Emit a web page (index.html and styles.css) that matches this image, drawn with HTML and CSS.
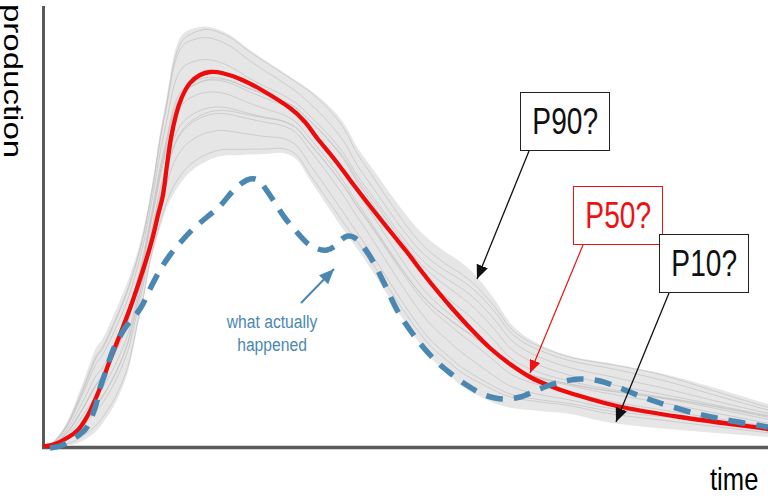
FILE: index.html
```html
<!DOCTYPE html>
<html lang="en">
<head>
<meta charset="utf-8">
<title>Production forecast uncertainty</title>
<link rel="stylesheet" href="styles.css">
</head>
<body>
<div class="chart">
  <svg class="plot" width="768" height="500" viewBox="0 0 768 500">
    <defs>
      <marker id="ah-black" markerUnits="userSpaceOnUse" viewBox="0 0 14 12" markerWidth="14" markerHeight="12" refX="14" refY="6" orient="auto"><path class="head-black" d="M0,0 L14,6 L0,12 Z"/></marker>
      <marker id="ah-red" markerUnits="userSpaceOnUse" viewBox="0 0 13 11" markerWidth="13" markerHeight="11" refX="13" refY="5.5" orient="auto"><path class="head-red" d="M0,0 L13,5.5 L0,11 Z"/></marker>
      <marker id="ah-blue" markerUnits="userSpaceOnUse" viewBox="0 0 15 13" markerWidth="15" markerHeight="13" refX="15" refY="6.5" orient="auto"><path class="head-blue" d="M0,0 L15,6.5 L0,13 Z"/></marker>
    </defs>
    <line class="axis" x1="43.5" y1="6" x2="43.5" y2="449"/>
    <line class="axis axis-x" x1="42" y1="447.5" x2="768" y2="447.5"/>
    <path id="band" class="band"/>
    <g id="runs" class="runs"></g>
    <path id="p50" class="p50"/>
    <path id="actual" class="actual"/>
    <line class="ptr ptr-black" x1="529" y1="151" x2="477" y2="279" marker-end="url(#ah-black)"/>
    <line class="ptr ptr-red" x1="583" y1="245" x2="530" y2="373" marker-end="url(#ah-red)"/>
    <line class="ptr ptr-black" x1="669" y1="293" x2="616" y2="422" marker-end="url(#ah-black)"/>
    <line class="ptr ptr-blue" x1="301" y1="303" x2="334" y2="269" marker-end="url(#ah-blue)"/>
  </svg>
  <div class="axis-title y-title">production</div>
  <div class="axis-title x-title"><span>time</span></div>
  <div class="callout c90"><span>P90?</span></div>
  <div class="callout c50"><span>P50?</span></div>
  <div class="callout c10"><span>P10?</span></div>
  <div class="note"><span>what actually<br>happened</span></div>
</div>
<script src="chart.js"></script>
</body>
</html>
```

FILE: styles.css
```css
html, body {
  margin: 0;
  padding: 0;
  background: #ffffff;
}
body {
  font-family: "Liberation Sans", Arial, sans-serif;
}
.chart {
  position: relative;
  width: 768px;
  height: 500px;
  overflow: hidden;
}
.plot {
  display: block;
}
.axis {
  stroke: #5a5a5a;
  stroke-width: 3;
}
.axis-x {
  stroke-width: 3.4;
}
.band {
  fill: #e6e6e6;
}
.runs path {
  fill: none;
  stroke: #c4c4c4;
  stroke-width: 0.8;
}
.p50 {
  fill: none;
  stroke: #ee0b0b;
  stroke-width: 4.3;
  stroke-linejoin: round;
  stroke-linecap: round;
}
.actual {
  fill: none;
  stroke: #4a88b2;
  stroke-width: 5.5;
  stroke-dasharray: 17 11;
}
.ptr {
  fill: none;
}
.ptr-black {
  stroke: #111111;
  stroke-width: 1.3;
}
.ptr-red {
  stroke: #ee1111;
  stroke-width: 1.2;
}
.ptr-blue {
  stroke: #4a88b2;
  stroke-width: 2;
}
.head-black { fill: #111111; }
.head-red { fill: #ee1111; }
.head-blue { fill: #4a88b2; }

.axis-title {
  position: absolute;
  left: 0;
  top: 0;
  color: #000000;
  white-space: nowrap;
}
.y-title {
  font-size: 33px;
  line-height: 33px;
  transform-origin: 0 0;
  transform: translate(26px, 4px) scaleX(0.78) rotate(90deg);
}
.x-title {
  left: 710px;
  top: 463px;
  font-size: 32px;
  line-height: 32px;
}
.x-title span {
  display: inline-block;
  transform-origin: 0 0;
  transform: scaleX(0.8);
}
.callout {
  position: absolute;
  box-sizing: border-box;
  width: 90px;
  height: 59px;
  background: #ffffff;
  border: 1.5px solid #222222;
  display: flex;
  align-items: center;
  justify-content: center;
  font-size: 37px;
  line-height: 1;
  color: #111111;
}
.callout span {
  display: inline-block;
  transform: scaleX(0.76);
}
.c90 { left: 520px; top: 92px; }
.c50 { left: 573px; top: 186px; border-color: #ee1111; color: #ee1111; }
.c10 { left: 659px; top: 234px; }
.note {
  position: absolute;
  left: 202px;
  top: 311px;
  width: 140px;
  text-align: center;
  font-size: 18px;
  line-height: 23.4px;
  color: #4a88b2;
}
.note span {
  display: inline-block;
  transform: scaleX(0.87);
}
```

FILE: chart.js
```js
(function () {
  function seg(pts) {
    var out = [];
    for (var i = 0; i < pts.length - 1; i++) {
      var p0 = pts[i - 1] || pts[i], p1 = pts[i], p2 = pts[i + 1], p3 = pts[i + 2] || pts[i + 1];
      out.push([
        p1[0] + (p2[0] - p0[0]) / 6, p1[1] + (p2[1] - p0[1]) / 6,
        p2[0] - (p3[0] - p1[0]) / 6, p2[1] - (p3[1] - p1[1]) / 6,
        p2[0], p2[1], p1[0], p1[1]
      ]);
    }
    return out;
  }
  function path(pts) {
    var d = 'M' + pts[0][0] + ',' + pts[0][1];
    seg(pts).forEach(function (s) {
      d += ' C' + s[0].toFixed(1) + ',' + s[1].toFixed(1) + ' ' + s[2].toFixed(1) + ',' + s[3].toFixed(1) + ' ' + s[4] + ',' + s[5];
    });
    return d;
  }
  function sample(pts) {
    var out = [];
    seg(pts).forEach(function (s) {
      for (var k = 0; k < 24; k++) {
        var t = k / 24, u = 1 - t;
        var a = u * u * u, b = 3 * u * u * t, c = 3 * u * t * t, e = t * t * t;
        out.push([a * s[6] + b * s[0] + c * s[2] + e * s[4], a * s[7] + b * s[1] + c * s[3] + e * s[5]]);
      }
    });
    out.push(pts[pts.length - 1]);
    return out;
  }
  function yAt(poly, x) {
    for (var i = 0; i < poly.length - 1; i++) {
      var a = poly[i], b = poly[i + 1];
      if (x >= a[0] && x <= b[0]) {
        var f = b[0] === a[0] ? 0 : (x - a[0]) / (b[0] - a[0]);
        return a[1] + (b[1] - a[1]) * f;
      }
    }
    return poly[poly.length - 1][1];
  }

  var U = [[45,446],[55,440],[68,420],[82,385],[95,350],[103,338],[115,312],[130,275],[142,235],[152,185],[160,133],[167,95],[174,55],[182,35],[195,28],[210,27],[230,35],[250,50],[280,70],[310,90],[330,107],[345,125],[357,147],[375,172],[392,196],[417,228],[440,248],[462,263],[477,277],[495,300],[512,325],[535,342],[570,356],[620,365],[680,378],[768,404]];
  var L = [[45,446],[60,446],[75,444],[93,434],[105,420],[117,400],[127,375],[133,350],[138,325],[143,303],[150,265],[158,235],[168,205],[180,184],[195,168],[217,157],[240,155],[265,154],[283,153],[297,160],[310,180],[330,210],[345,232],[363,257],[380,283],[397,310],[415,337],[430,357],[447,373],[463,387],[485,399],[507,407],[540,411],[570,414],[613,423],[680,430],[768,437]];
  var R = [[45,446],[55,444],[67,438],[78,430],[88,415],[95,400],[100,388],[110,360],[123,327],[133,300],[143,270],[152,240],[158,215],[163,195],[167,165],[171,138],[176,115],[182,97],[190,83],[200,75],[210,72],[222,73],[240,79],[260,89],[290,108],[305,122],[317,138],[335,160],[350,180],[370,206],[394,236],[407,252],[419,268],[434,287],[450,306],[470,328],[490,348],[510,364],[530,377],[550,386],[570,393],[617,406],[680,417],[768,429]];
  var B = [[50,448],[60,446],[70,441],[80,434],[87,427],[95,408],[100,388],[107,368],[113,350],[125,328],[140,309],[150,289],[160,270],[170,255],[180,243],[192,230],[207,217],[220,206],[232,192],[242,183],[250,179],[258,180],[265,188],[275,203],[285,218],[295,230],[307,243],[318,249],[327,250],[335,246],[342,239],[348,236],[355,238],[365,249],[375,265],[385,285],[397,310],[410,330],[423,347],[437,362],[450,373],[465,384],[480,393],[495,398],[507,399],[520,397],[535,391],[550,385],[565,381],[580,379],[600,381],[620,388],[640,396],[660,403],[690,412],[727,420],[768,427]];

  var band = path(U);
  var rl = L.slice().reverse();
  band += ' L' + rl[0][0] + ',' + rl[0][1] + path(rl).replace(/^M[^C]*/, ' ') + ' Z';
  document.getElementById('band').setAttribute('d', band);
  document.getElementById('p50').setAttribute('d', path(R));
  document.getElementById('actual').setAttribute('d', path(B));

  var pu = sample(U), pl = sample(L);
  var ts = [0.05, 0.13, 0.24, 0.33, 0.39, 0.45, 0.5, 0.56, 0.63, 0.71, 0.8, 0.9];
  var g = document.getElementById('runs');
  ts.forEach(function (t0, i) {
    var d = '';
    for (var x = 45; x <= 768; x += 1.5) {
      var t = t0 + 0.05 * Math.sin(x / (55 + i * 7) + i * 1.7);
      t = Math.max(0.02, Math.min(0.97, t));
      var yu = yAt(pu, x), yl = yAt(pl, x);
      var y = yu + (yl - yu) * t;
      d += (d ? ' L' : 'M') + x.toFixed(1) + ',' + y.toFixed(1);
    }
    var p = document.createElementNS('http://www.w3.org/2000/svg', 'path');
    p.setAttribute('d', d);
    g.appendChild(p);
  });
})();
```
